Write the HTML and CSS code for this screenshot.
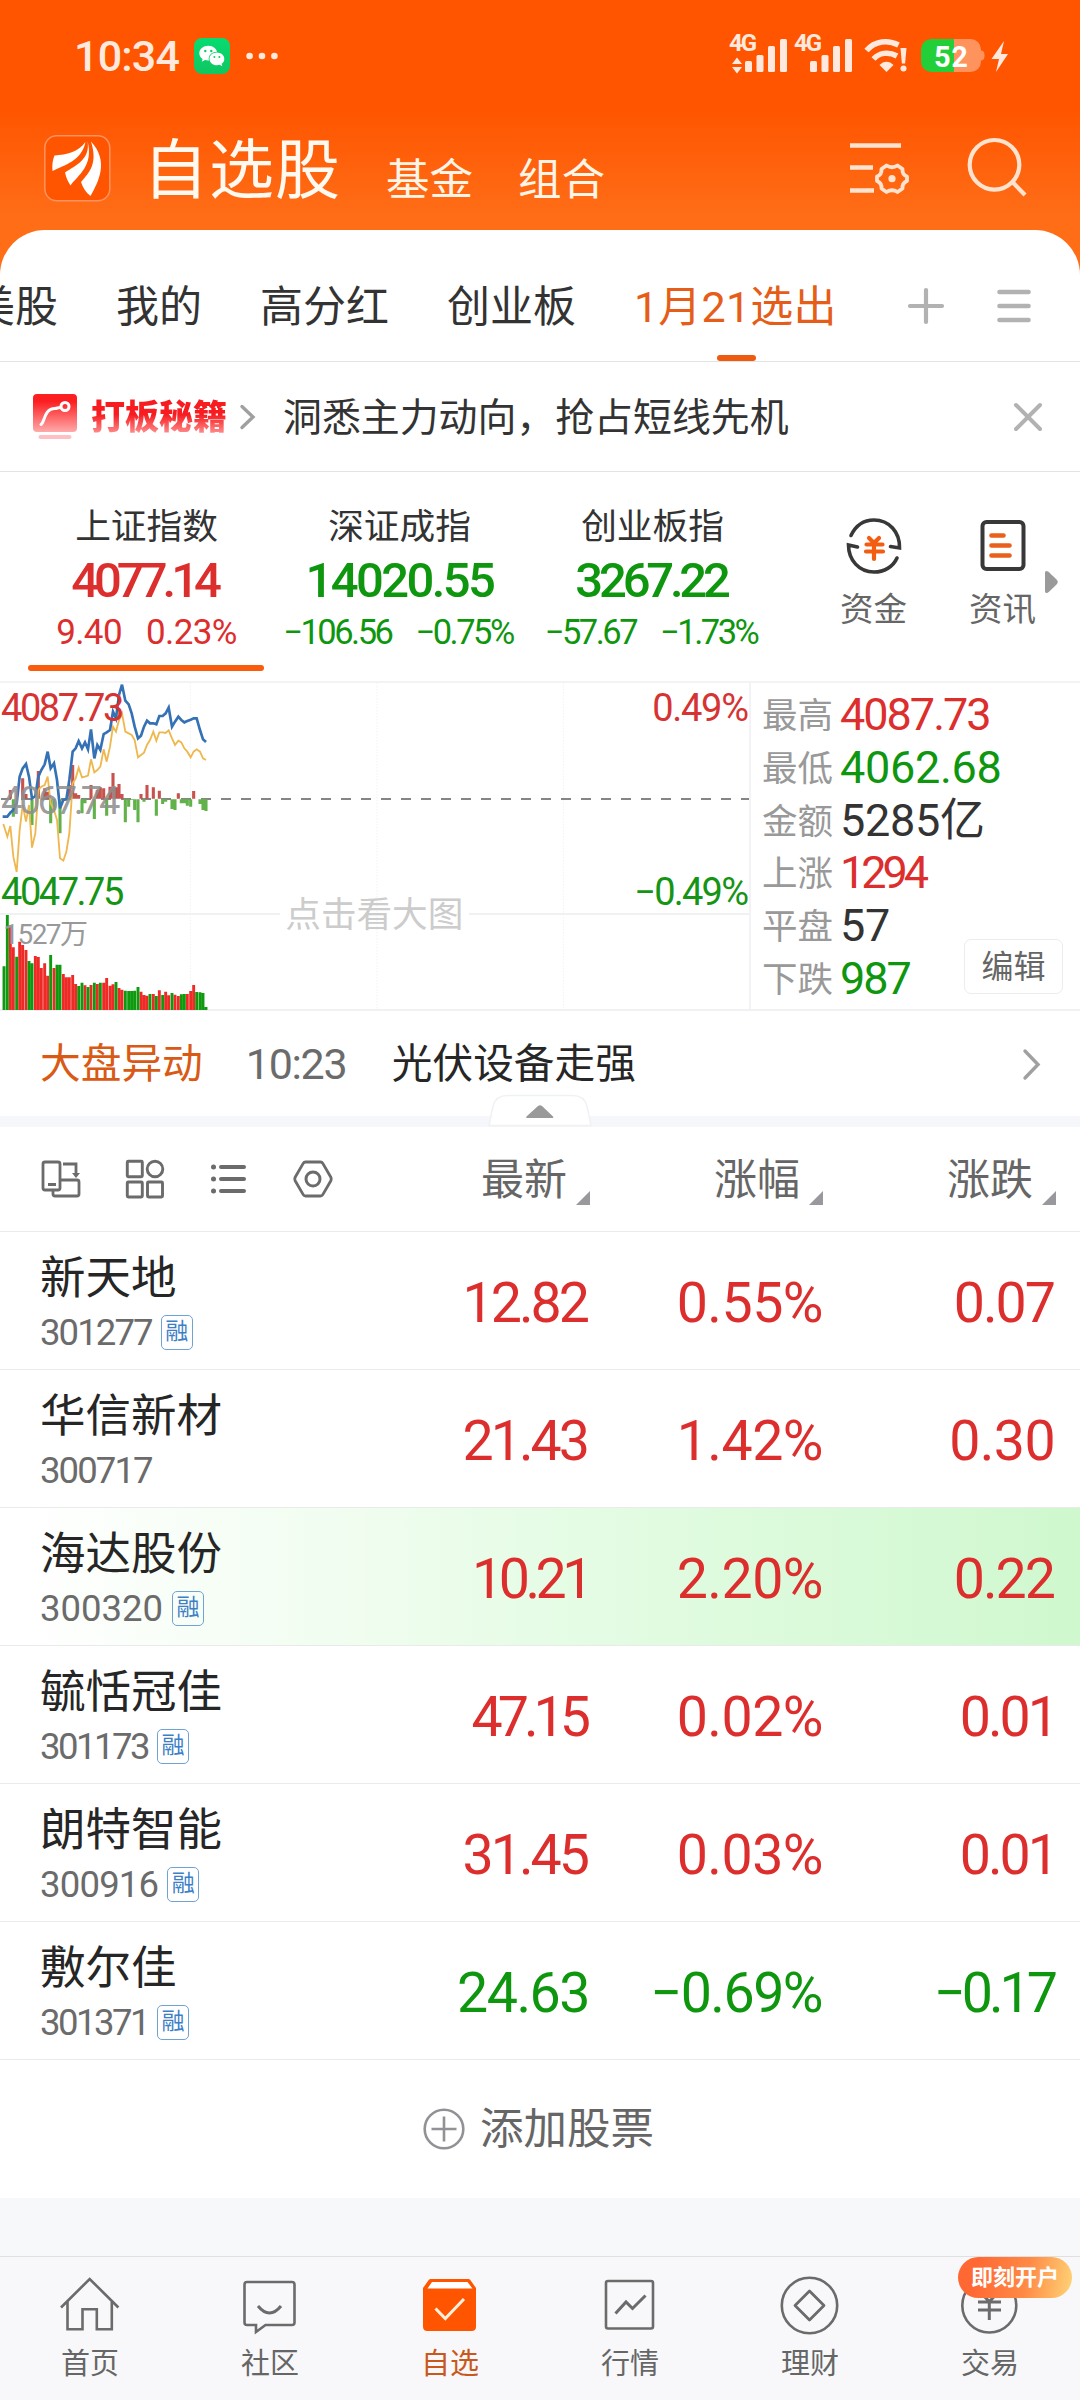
FILE: index.html
```html
<!DOCTYPE html>
<html lang="zh-CN">
<head>
<meta charset="utf-8">
<title>自选股</title>
<link rel="stylesheet" href="styles.css">
</head>
<body>
<div class="top">
  <div class="status">
    <span class="clock">10:34</span>
    <svg class="wechat" width="36" height="36" viewBox="0 0 36 36"><defs><linearGradient id="wg" x1="0" y1="0" x2="0" y2="1"><stop offset="0" stop-color="#07dc70"/><stop offset="1" stop-color="#0fc661"/></linearGradient></defs><rect width="36" height="36" rx="8" fill="url(#wg)"/><path fill="#fff" d="M14.300 7.800c-5 0-9 3.300-9 7.400 0 2.400 1.300 4.400 3.300 5.800l-.9 2.800 3.300-1.700c1 .3 2.100.5 3.300.5 5 0 8.900-3.300 8.900-7.400s-4-7.400-8.900-7.400z"/><ellipse cx="22.900" cy="20.800" rx="8.300" ry="7" fill="#0acf68"/><path fill="#fff" d="M22.900 14.600c-4.100 0-7.400 2.800-7.400 6.300s3.300 6.300 7.400 6.300c1 0 1.900-.1 2.700-.4l2.700 1.500-.7-2.500c1.700-1.200 2.700-2.900 2.700-4.900 0-3.500-3.300-6.300-7.400-6.300z"/><g fill="#0acf68"><circle cx="11.300" cy="13" r="1.200"/><circle cx="17.300" cy="13" r="1.200"/><circle cx="20.400" cy="19" r="1"/><circle cx="25.400" cy="19" r="1"/></g></svg>
    <svg class="dots" width="32" height="8" viewBox="0 0 32 8" fill="#ffe9de"><circle cx="3.600" cy="4" r="3.300"/><circle cx="16" cy="4" r="3.300"/><circle cx="28.400" cy="4" r="3.300"/></svg>
    <svg class="signals" width="282" height="72" viewBox="728 20 282 72" fill="#ffe9de">
      <text class="net" x="729" y="51" textLength="28">4G</text><text class="net" x="794" y="51" textLength="28">4G</text>
      <path d="M737 57.500l5 6.500h-10zM737 73.500l5-6.500h-10z"/>
      <rect x="745" y="61" width="7" height="11" rx="1.500"/><rect x="756.500" y="55" width="7" height="17" rx="1.500"/><rect x="768" y="46" width="7" height="26" rx="1.500"/><rect x="780" y="39" width="7" height="33" rx="1.500"/>
      <rect x="810" y="61" width="7" height="11" rx="1.500"/><rect x="821.500" y="55" width="7" height="17" rx="1.500"/><rect x="833" y="46" width="7" height="26" rx="1.500"/><rect x="845" y="39" width="7" height="33" rx="1.500"/>
      <path fill="none" stroke="#ffe9de" stroke-width="5.500" d="M866.500 50.500C875 40.500 888 39.500 898.500 45M873.500 59C879 53 888 51 897 56"/><path d="M879.500 65c4-4.500 10-4.500 14 0l-7 7z"/><path d="M900.500 48h6l-1.400 15.500h-3.200z"/><circle cx="903.500" cy="68.500" r="3"/>
      <path fill="#ff935e" d="M954 39h16.500a10.500 10.500 0 0 1 10.500 10.500v1c3 .5 3.500 2 3.500 5s-.5 4.500-3.500 5v1A10.500 10.500 0 0 1 970.500 72H954z"/><path fill="#22cf38" d="M954 39v33h-22.500A10.500 10.500 0 0 1 921 61.500v-12A10.500 10.500 0 0 1 931.500 39z"/>
      <text class="batt" x="934" y="67" textLength="34">52</text>
      <path d="M1004 41l-12.500 18h7.500l-3 13 12-18h-7z"/>
    </svg>
  </div>
  <div class="header">
    <svg width="67" height="67" viewBox="0 0 67 67"><rect x=".8" y=".8" width="65" height="65" rx="12" fill="#ff5500" stroke="#ff9461" stroke-width="1.500"/><g fill="#fff"><path d="M41.500 7C34 17 23 19.500 10.500 20.500 8.500 25 8 30 8.500 36c12-6 29-10 33-29z"/><path d="M43.500 6c3 18-11 24-22.500 31.500 1 5 3 9 5.500 13C34 40 50 31 43.500 6z"/><path d="M47 6.500c7 22-1.500 31-10 40.500 2 6 5 10.500 9.500 14C55 46 65 26 47 6.500z"/></g></svg>
    <h1>自选股</h1><span class="sec">基金</span><span class="sec">组合</span>
    <svg class="filter" width="60" height="54" viewBox="849 141 60 54" fill="none" stroke="#ffe3cf" stroke-width="4.600"><path d="M850 145.500h51M850 167.500h23M850 190.500h24"/><path stroke-width="3.800" stroke-linejoin="round" d="M886.500 165.500q5.500 3.500 11 0l5 3.500q-.5 5.500 4.500 7.500v4.500q-5 2-4.500 7.500l-5 3.500q-5.500-3.500-11 0l-5-3.500q.5-5.500-4.500-7.500v-4.500q5-2 4.500-7.500z"/><circle cx="892" cy="178.700" r="3.600" fill="#ffe3cf" stroke="none"/></svg>
    <svg width="60" height="62" viewBox="967 137 60 62" fill="none" stroke="#ffe3cf" stroke-width="4.200"><circle cx="994.500" cy="164.800" r="24.800"/><path d="M1012 181.500l13 13.500"/></svg>
  </div>
</div>
<main class="sheet">
  <nav class="tabs">
    <span>美股</span><span>我的</span><span>高分红</span><span>创业板</span><span class="on">1月21选出</span>
    <svg class="plus" width="38" height="38" viewBox="0 0 38 38" stroke="#b2b2b2" stroke-width="4.200" stroke-linecap="round"><path d="M19 3v32M3 19h32"/></svg>
    <svg width="36" height="34" viewBox="0 0 36 34" stroke="#b2b2b2" stroke-width="4.600" stroke-linecap="round"><path d="M3.500 3h29M3.500 17h29M3.500 31h29"/></svg>
  </nav>
  <div class="promo">
    <svg width="44" height="46" viewBox="0 0 44 46"><defs><linearGradient id="pg" x1="0" y1="0" x2="0" y2="1"><stop offset=".2" stop-color="#fb1f22"/><stop offset="1" stop-color="#ffaaaa"/></linearGradient></defs><rect width="44" height="38" rx="4" fill="url(#pg)"/><path fill="none" stroke="#fff" stroke-width="3" stroke-linecap="round" d="M8 30.500C12 28 11 14.500 22 14.500c2 0 3-1 5.500-1"/><circle cx="32" cy="12.500" r="4" fill="none" stroke="#fff" stroke-width="3"/><rect x="5.500" y="41" width="33" height="4" rx="2" fill="#ffc0c4"/></svg>
    <b>打板秘籍</b>
    <svg class="go" width="18" height="26" viewBox="0 0 18 26" fill="none" stroke="#a0a0a0" stroke-width="3.400" stroke-linecap="round"><path d="M3 2.500L14 13 3 23.500"/></svg>
    <span>洞悉主力动向，抢占短线先机</span>
    <svg class="close" width="30" height="30" viewBox="0 0 30 30" stroke="#b2b2b2" stroke-width="4" stroke-linecap="round"><path d="M3 3l24 24M27 3L3 27"/></svg>
  </div>
  <section class="indices">
    <div class="idx up on"><span>上证指数</span><strong class="k">4077.14</strong><em><i>9.40</i><i>0.23%</i></em></div>
    <div class="idx down"><span>深证成指</span><strong>14020.55</strong><em><i>−106.56</i><i>−0.75%</i></em></div>
    <div class="idx down"><span>创业板指</span><strong class="m">3267.22</strong><em><i>−57.67</i><i>−1.73%</i></em></div>
    <div class="tool"><svg width="56" height="56" viewBox="0 0 56 56" fill="none" stroke="#383838" stroke-width="3.600" stroke-linecap="round"><path d="M5 17.500C10 7 18 2 28 2c15 0 26 12 25.500 28l-9-1.500M51 40C47 49 38 54 28 54 13 54 2.500 42 2.500 27l9 2"/><path stroke="#f35d12" stroke-width="4.200" d="M23 20l5 5 5-5M20.500 26.500h16M20 33.500h17M28 27v14"/></svg><span>资金</span></div>
    <div class="tool"><svg width="56" height="56" viewBox="0 0 56 56" fill="none" stroke="#383838" stroke-width="4"><rect x="7.500" y="4" width="41" height="47" rx="4"/><path stroke="#e9601d" stroke-width="4.600" stroke-linecap="round" d="M16.500 17.500h12M16.500 27.500h18M16.500 37.500h18"/></svg><span>资讯</span></div>
    <svg class="more" width="14" height="24" viewBox="0 0 14 24"><path fill="#9a9a9a" d="M0 3q0-3 3-1.500Q5 3 12 10q1.800 2 0 4Q5 21 3 22.500 0 24 0 21z"/></svg>
  </section>
  <section class="market">
    <svg class="chart" width="750" height="328" viewBox="0 36 2250 984" fill="none">
      <g stroke="#ebebed" stroke-width="3"><path stroke-dasharray="3 6" d="M571 40V1018M1131 40V1018M1690 40V1018"/><path stroke="#f0f1f3" stroke-width="6" d="M0 732H840M1407 732H2250"/></g>
      <path stroke="#858585" stroke-width="5.500" stroke-dasharray="30 30" d="M3 387H2250"/>
      <path stroke="#c8524d" stroke-width="9.300" d="M31 386V360M68 386V325M78 386V372M115 386V303M134 386V355M143 386V365M208 386V345M218 386V285M227 386V370M236 386V375M273 386V345M292 386V360M301 386V352M311 386V355M330 386V350M339 386V309M348 386V352M357 386V342M366 386V372M423 386V372M441 386V345M460 386V352M478 386V362M535 386V370M581 386V363"/>
      <path stroke="#62b24a" stroke-width="9.300" d="M40 388V440M96 388V465M152 388V460M162 388V420M180 388V490M246 388V430M255 388V400M283 388V447M320 388V437M376 388V457M386 388V410M395 388V390M404 388V420M414 388V457M432 388V395M469 388V437M488 388V402M497 388V395M516 388V417M525 388V420M544 388V400M553 388V400M562 388V407M572 388V410M600 388V402M609 388V420M618 388V423"/>
      <polyline stroke="#efb84e" stroke-width="5.500" points="10,462 22,500 31,468 40,560 50,606 59,480 68,405 78,455 87,405 96,533 106,490 115,360 124,350 134,345 143,320 152,400 162,420 171,450 180,565 190,572 199,545 208,490 218,340 227,325 236,293 246,322 255,320 264,317 273,268 283,307 292,300 301,290 311,238 320,275 330,230 339,170 348,185 357,150 366,130 376,185 386,190 395,195 404,210 414,262 423,255 432,248 441,225 450,210 460,185 469,212 478,187 488,187 497,189 506,181 516,205 525,225 535,212 544,217 553,235 562,245 572,262 581,245 590,238 600,245 609,265 618,270"/>
      <polyline stroke="#3571b5" stroke-width="8" points="8,440 22,440 31,428 40,420 50,400 59,320 68,295 78,282 87,320 96,385 106,378 115,320 124,300 134,283 143,245 152,295 162,280 171,330 180,415 190,390 199,388 208,330 218,245 227,235 236,213 246,235 255,217 264,238 273,178 283,265 292,225 301,240 311,192 320,187 330,180 339,125 348,145 357,75 366,44 376,92 386,103 395,130 404,170 414,205 423,197 432,170 441,152 450,160 460,160 469,163 478,138 488,138 497,130 506,113 516,170 525,155 535,140 544,150 553,157 562,153 572,149 581,145 590,145 600,180 609,208 618,216"/>
      <path stroke="#ee2a27" stroke-width="8.700" d="M31 1020V765M40 1020V832M59 1020V815M68 1020V825M78 1020V840M106 1020V858M115 1020V861M124 1020V894M134 1020V880M143 1020V917M162 1020V894M190 1020V912M199 1020V922M208 1020V922M218 1020V915M227 1020V942M255 1020V946M273 1020V945M292 1020V942M311 1020V938M320 1020V924M330 1020V947M339 1020V943M357 1020V954M366 1020V959M423 1020V965M432 1020V975M441 1020V977M460 1020V972M478 1020V961M497 1020V965M506 1020V976M525 1020V974M535 1020V978M562 1020V972M572 1020V963M581 1020V945"/>
      <path stroke="#0e990e" stroke-width="8.700" d="M12 1020V889M22 1020V735M50 1020V860M87 1020V873M96 1020V880M152 1020V855M171 1020V884M180 1020V884M236 1020V948M246 1020V938M264 1020V951M283 1020V938M301 1020V938M348 1020V936M376 1020V962M386 1020V963M395 1020V963M404 1020V962M414 1020V951M450 1020V972M469 1020V978M488 1020V975M516 1020V969M544 1020V973M553 1020V972M590 1020V966M600 1020V967M609 1020V969M618 1020V1011"/>
      <g class="axis"><text class="r" x="3" y="154" textLength="370">4087.73</text><text class="n" x="3" y="431" textLength="358">4067.74</text><text class="g" x="3" y="704" textLength="370">4047.75</text><text class="r" x="1957" y="154" textLength="290">0.49%</text><text class="g" x="1903" y="704" textLength="344">−0.49%</text></g>
      <text class="vol" x="10" y="822" textLength="254">1527万</text>
      <text class="hint" x="856" y="772" textLength="534">点击看大图</text>
    </svg>
    <dl>
      <div><dt>最高</dt><dd class="up t">4087.73</dd></div>
      <div><dt>最低</dt><dd class="down">4062.68</dd></div>
      <div><dt>金额</dt><dd>5285亿</dd></div>
      <div><dt>上涨</dt><dd class="up tt">1294</dd></div>
      <div><dt>平盘</dt><dd>57</dd></div>
      <div><dt>下跌</dt><dd class="down t">987</dd></div>
    </dl>
    <button class="edit">编辑</button>
  </section>
  <div class="alert"><span class="tag">大盘异动</span><time>10:23</time><span>光伏设备走强</span>
    <svg width="20" height="34" viewBox="0 0 20 34" fill="none" stroke="#a0a0a0" stroke-width="3.400" stroke-linecap="round"><path d="M3 4l13 13.500L3 31"/></svg>
  </div>
  <div class="band"><svg class="handle" width="104" height="34" viewBox="0 0 104 34"><path fill="#fff" stroke="#f0f1f4" stroke-width="1.500" d="M1 31.500L5 12Q8 1.500 19 1.500H85Q96 1.500 99 12L103 31.500z"/><path fill="#999" d="M38.500 24q-1-1 .5-2L50 12q2-1.500 4 0l10.500 10q1.500 1 .5 2z"/></svg></div>
  <div class="thead">
    <div class="tools">
      <svg width="40" height="38" viewBox="0 0 40 38" fill="none" stroke="#6b6b6b" stroke-width="2.800"><rect x="2" y="2" width="17" height="28" rx="2"/><path d="M7 24.500h8M22 4h13v11M12 30v4q0 2 2 2h22q2 0 2-2V22q0-2-2-2H20"/><path fill="#6b6b6b" stroke="none" d="M31 13h8l-4 5z"/></svg>
      <svg width="40" height="40" viewBox="0 0 40 40" fill="none" stroke="#6b6b6b" stroke-width="2.900"><rect x="2.300" y="2.300" width="15" height="15.500" rx="1"/><circle cx="30" cy="10" r="7.800"/><rect x="2.300" y="23" width="15" height="15" rx="1"/><rect x="22.500" y="23" width="15" height="15" rx="1"/></svg>
      <svg width="40" height="30" viewBox="0 0 40 30" fill="#6b6b6b" stroke="#6b6b6b" stroke-width="4" stroke-linecap="round"><path d="M12 3h23M12 15h23M12 27h23"/><g stroke="none"><circle cx="4.500" cy="3" r="2.500"/><circle cx="4.500" cy="15" r="2.500"/><circle cx="4.500" cy="27" r="2.500"/></g></svg>
      <svg width="40" height="38" viewBox="0 0 40 38" fill="none" stroke="#6b6b6b" stroke-width="2.800"><path stroke-linejoin="round" d="M12.500 2h15q1.500 0 2.300 1.400L37.700 17q1 2 0 4L29.800 34.600Q29 36 27.500 36h-15q-1.500 0-2.300-1.400L2.300 21q-1-2 0-4l7.900-13.600Q11 2 12.500 2z"/><circle cx="20" cy="19" r="7" stroke-width="3"/></svg>
    </div>
    <span>最新</span><span>涨幅</span><span>涨跌</span>
  </div>
  <div class="row"><div class="stock"><b>新天地</b><small>301277<i>融</i></small></div><span class="up o">12.82</span><span class="up">0.55%</span><span class="up">0.07</span></div>
  <div class="row"><div class="stock"><b>华信新材</b><small>300717</small></div><span class="up o">21.43</span><span class="up">1.42%</span><span class="up w">0.30</span></div>
  <div class="row hot"><div class="stock"><b>海达股份</b><small class="wide">300320<i>融</i></small></div><span class="up oo">10.21</span><span class="up">2.20%</span><span class="up">0.22</span></div>
  <div class="row"><div class="stock"><b>毓恬冠佳</b><small class="slim">301173<i>融</i></small></div><span class="up ooo">47.15</span><span class="up">0.02%</span><span class="up s">0.01</span></div>
  <div class="row"><div class="stock"><b>朗特智能</b><small class="mid">300916<i>融</i></small></div><span class="up o">31.45</span><span class="up">0.03%</span><span class="up s">0.01</span></div>
  <div class="row"><div class="stock"><b>敷尔佳</b><small class="slim">301371<i>融</i></small></div><span class="down f">24.63</span><span class="down f">−0.69%</span><span class="down neg">−0.17</span></div>
  <div class="add"><svg width="42" height="42" viewBox="0 0 42 42" fill="none" stroke="#919196" stroke-width="2.600"><circle cx="21" cy="21" r="19.300"/><path d="M21 8.500v25M8.500 21h25"/></svg><span>添加股票</span></div>
</main>
<nav class="bottom">
  <a><svg width="60" height="60" viewBox="60 2275 60 60"><path d="M61 2307.500l28.700-28.500 28.700 28.500M67.500 2301v28.300h15v-20h14.300v20h15V2301"/></svg>首页</a>
  <a><svg width="60" height="60" viewBox="240 2275 60 60"><path d="M247 2282h45q2.500 0 2.500 2.500v38q0 2.500-2.500 2.500h-26.500l-9.500 7v-7h-9q-2.500 0-2.500-2.500v-38q0-2.500 2.500-2.500z"/><path stroke-width="3" d="M258 2306q11.500 14 23 0"/></svg>社区</a>
  <a class="on"><svg width="60" height="60" viewBox="420 2275 60 60"><path fill="#ff5500" stroke="none" d="M430.500 2279h38q1 0 1.800 1l5.700 8v38.500q0 4.500-4.500 4.500h-44q-4.500 0-4.500-4.500V2288l5.700-8q.8-1 1.800-1z"/><path fill="#fff" stroke="none" d="M432 2282h35.500l5 6.500h-45z"/><path stroke="#fff0dc" stroke-width="3" d="M435.500 2308.500l9.800 10 18.700-19.500"/></svg>自选</a>
  <a><svg width="60" height="60" viewBox="600 2275 60 60"><rect x="606" y="2281" width="47" height="47.500" rx="2"/><path stroke-width="3" d="M615.500 2313.500l10.500-11.500 6.500 6.500 13-13"/></svg>行情</a>
  <a><svg width="60" height="60" viewBox="780 2275 60 60"><circle cx="809.500" cy="2305.500" r="27.700"/><path stroke-width="2.800" stroke-linejoin="round" d="M809.500 2291l14.500 14.500-14.500 14.500-14.500-14.500z"/></svg>理财</a>
  <a><svg width="60" height="60" viewBox="960 2275 60 60"><circle cx="989.300" cy="2305.500" r="27"/><path stroke-width="3" d="M981 2293l8.300 8.500 8.300-8.500M978 2302h23M978 2310h23M989.300 2301v19"/></svg>交易<span class="open">即刻开户</span></a>
</nav>
</body>
</html>
```
FILE: styles.css
```css
* { box-sizing: border-box; }
body { margin: 0; width: 1080px; height: 2400px; overflow: hidden; background: #f7f8fa; color: #333; font-family: Roboto, "Noto Sans CJK SC", sans-serif; }
svg { display: block; flex: none; }
i, em { font-style: normal; }
.up { color: #dd2e2e; }
.down { color: #0f960f; }

.top { height: 290px; background: linear-gradient(#ff5500 110px, #ff6d17 215px); }
.status { display: flex; align-items: center; height: 112px; padding: 0 72px 0 74px; }
.clock { width: 105px; color: #ffe9de; font-size: 43px; font-weight: 500; line-height: 60px; letter-spacing: -.8px; white-space: nowrap; }
.wechat { margin-left: 15px; }
.dots { margin-left: 16px; }
.signals { margin: 0 -2px 0 auto; }
.net { font-size: 24px; font-weight: 700; }
.batt { font-size: 29px; font-weight: 700; fill: #fff; }
.header { display: flex; align-items: center; height: 112px; padding: 0 53px 0 44px; }
h1 { margin: 6px 0 0 32px; color: #fff9f0; font-size: 65px; font-weight: 400; line-height: 80px; letter-spacing: 1px; }
.sec { margin: 26px 0 0 45px; color: #fff5e6; font-size: 43.500px; line-height: 60px; }
.sec:nth-child(3) { margin-left: 45px; }
.filter { margin: 0 58px 0 auto; }

.sheet { position: relative; height: 1968px; margin-top: -60px; background: #fff; border-radius: 45px 45px 0 0; overflow: hidden; }
.tabs { display: flex; align-items: center; height: 132px; padding: 20px 48px 0 0; margin-left: -28px; border-bottom: 1.500px solid #e3e3e3; font-size: 43px; line-height: 60px; }
.tabs span { margin: 2px 58px 0 0; white-space: nowrap; }
.tabs .on { position: relative; color: #e55d18; letter-spacing: .2px; }
.tabs .on::after { content: ""; position: absolute; left: 83px; bottom: -24px; width: 39px; height: 6px; border-radius: 3px; background: #ee5a10; }
.plus { margin: 0 51px 0 auto; }
.promo { display: flex; align-items: center; height: 110px; padding: 0 37px 0 33px; border-bottom: 1.500px solid #e3e3e3; font-size: 38.900px; line-height: 50px; }
.promo b { margin-left: 14px; font-size: 34px; font-weight: 900; background: linear-gradient(#f61c20 45%, #ff8b8b 82%); background-clip: text; -webkit-background-clip: text; color: transparent; }
.promo span { margin-top: 2px; }
.go { margin: 0 26px 0 12px; }
.close { margin-left: auto; }

.indices { display: flex; height: 210px; padding-left: 20px; }
.idx { display: flex; flex-direction: column; align-items: center; width: 253px; padding-top: 32px; position: relative; }
.idx span { color: #333; font-size: 35.700px; line-height: 46px; }
.idx strong { margin-top: 1px; font-size: 49px; font-weight: 500; line-height: 60px; letter-spacing: -2.600px; }
.idx .k { margin-left: -5px; letter-spacing: -5px; }
.idx .m { margin-left: -3px; letter-spacing: -4.200px; }
.idx em { display: flex; gap: 24px; font-size: 35px; line-height: 43px; letter-spacing: -.6px; white-space: nowrap; }
.idx.down em { margin-left: -3px; font-size: 34.500px; letter-spacing: -2.500px; gap: 24px; }
.idx.on::after { content: ""; position: absolute; left: 8px; right: 9px; bottom: 11px; height: 6px; border-radius: 3px; background: #f95c0c; }
.tool { display: flex; flex-direction: column; align-items: center; width: 129px; padding-top: 46px; color: #666; font-size: 33.500px; line-height: 46px; }
.tool span { margin-top: 13px; }
.tool:nth-child(4) { margin-left: 30px; }
.more { margin: 98px 0 0 -22px; }

.market { position: relative; display: flex; height: 330px; border-top: 2px solid #f3f3f5; border-bottom: 2px solid #f1f1f3; margin-top: -1px; }
.chart { height: 328px; margin-top: -1px; }
.axis text { font-size: 114px; }
.r { fill: #d63333; } .g { fill: #159415; } .n { fill: #8f8f8f; fill-opacity: .9; }
.vol { font-size: 84px; fill: #999; }
.hint { font-size: 107px; fill: #ccc; }
dl { flex: 1; margin: 0; padding: 6px 0 0 11px; border-left: 2px solid #f3f3f5; margin-left: -1px; }
dl div { display: flex; align-items: center; height: 52.700px; }
dt { width: 78px; margin-top: -5px; color: #999; font-size: 35.500px; }
dd { margin: 0; font-size: 45px; line-height: 52px; letter-spacing: -.3px; }
dd.t { letter-spacing: -2px; }
dd.tt { letter-spacing: -4px; }
.edit { position: absolute; left: 964px; top: 256px; width: 99px; height: 55px; padding: 0; border: 1.500px solid #ececee; border-radius: 7px; background: #fff; color: #666; font: 32px/50px Roboto, "Noto Sans CJK SC", sans-serif; }

.alert { display: flex; align-items: center; height: 105px; padding: 0 38px 0 40px; color: #262626; font-size: 40.700px; line-height: 60px; }
.alert .tag { color: #d85a15; }
time { width: 97px; margin: 0 49px 0 43px; color: #6b6b6b; font-size: 43px; letter-spacing: -1.300px; white-space: nowrap; }
.alert svg { margin-left: auto; }
.band { position: relative; height: 11px; background: #f5f7fa; }
.handle { position: absolute; left: 488px; top: -22px; }
.thead { display: grid; grid-template-columns: 356px 234px 233px 233px; align-items: center; height: 105px; border-bottom: 1.500px solid #eaeaea; }
.tools { display: flex; align-items: center; gap: 44px; padding-left: 41px; }
.thead > span { position: relative; top: 1px; padding-right: 23px; text-align: right; color: #666; font-size: 43px; line-height: 60px; }
.thead > span::after { content: ""; position: absolute; right: 0; bottom: 5px; width: 14px; height: 14px; background: #98989d; clip-path: polygon(100% 0, 100% 100%, 0 100%); }
.row { display: grid; grid-template-columns: 356px 234px 233px 233px; align-items: center; height: 138px; border-bottom: 1.500px solid #eaeaea; }
.row > span { margin-top: 6px; text-align: right; font-size: 55.500px; line-height: 70px; letter-spacing: -.5px; white-space: nowrap; }
.row > .o { letter-spacing: -3px; padding-right: 3px; }
.row > .oo { letter-spacing: -4.500px; padding-right: 1px; }
.row > .ooo { letter-spacing: -5px; padding-right: 4px; }
.row > .f { letter-spacing: -1.500px; padding-right: 1px; }
.row > span:last-child { letter-spacing: -2px; padding-right: 2px; }
.row > .s:last-child { letter-spacing: -3px; padding-right: 0; }
.row > .neg:last-child { letter-spacing: -4px; }
.row > .w:last-child { letter-spacing: -.6px; padding-right: 1px; }
.hot { background: linear-gradient(90deg, #fff 20px, #f0fdef 360px, #e6fce6 540px, #cff8ce); }
.stock { display: flex; flex-direction: column; padding: 5px 0 0 40px; }
.stock b { color: #262626; font-size: 45.500px; font-weight: 400; line-height: 60px; }
.stock small { display: flex; align-items: center; gap: 9px; height: 50px; margin-top: -2px; color: #6b6b6b; font-size: 36.500px; letter-spacing: -1.900px; }
.stock .wide { letter-spacing: 0; }
.stock .mid { letter-spacing: -.8px; }
.stock .slim { letter-spacing: -2.500px; }
.stock i { width: 32px; height: 35px; border: 1.500px solid #6fa3d4; border-radius: 5px; color: #3d7fc6; font-size: 23px; line-height: 32px; text-align: center; letter-spacing: 0; }
.add { display: flex; align-items: center; justify-content: center; gap: 15px; height: 138px; padding-right: 3px; color: #666; font-size: 43.500px; line-height: 60px; }
.add span { margin-top: 2px; }

.bottom { display: grid; grid-template-columns: repeat(6, 180px); height: 144px; margin-top: 58px; border-top: 1.500px solid #e0e0e3; background: #f8f8fa; }
.bottom a { position: relative; display: flex; flex-direction: column; align-items: center; padding-top: 18px; color: #666; font-size: 29px; line-height: 36px; }
.bottom svg { margin-bottom: 11px; fill: none; stroke: #6b6b6b; stroke-width: 2.600; }
.bottom .on { color: #c8581c; }
.open { position: absolute; left: 58px; top: 0; width: 114px; height: 41px; border-radius: 21px; background: linear-gradient(100deg, #ff6733 15%, #ff8a45 60%, #ffd477); color: #fff; font-size: 22px; font-weight: 700; line-height: 41px; text-align: center; }
```
